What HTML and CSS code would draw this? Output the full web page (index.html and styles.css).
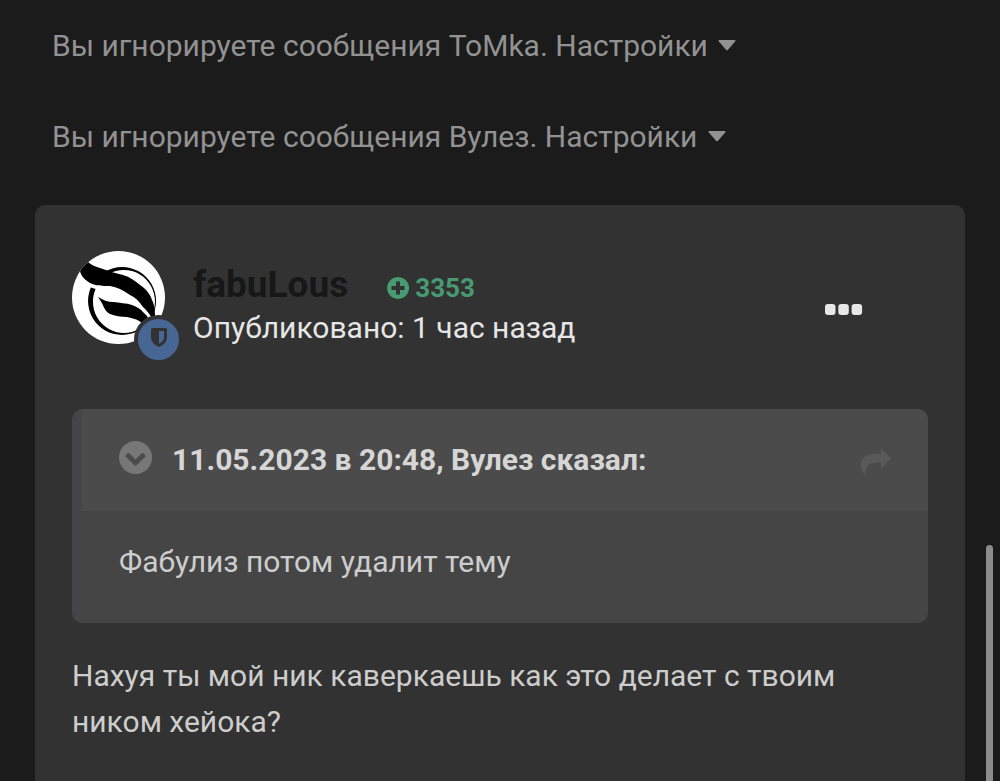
FILE: index.html
```html
<!DOCTYPE html>
<html lang="ru">
<head>
    <meta charset="UTF-8">
    <meta name="viewport" content="width=device-width, initial-scale=1.0">
    <title>Тема форума</title>
    <link rel="stylesheet" href="styles.css">
</head>
<body>
    <main class="feed">
        <!-- Ignored posts -->
        <div class="ignored">
            Вы игнорируете сообщения ToMka. <a href="#">Настройки
            <svg class="caret" viewBox="0 0 18 11"><path d="M1.500 0h15q1.500 0 .8 1.300L10 9.800q-1 1-2 0L.7 1.300Q0 0 1.500 0z"/></svg></a>
        </div>
        <div class="ignored">
            Вы игнорируете сообщения Вулез. <a href="#">Настройки
            <svg class="caret" viewBox="0 0 18 11"><path d="M1.500 0h15q1.500 0 .8 1.300L10 9.800q-1 1-2 0L.7 1.300Q0 0 1.500 0z"/></svg></a>
        </div>

        <!-- Post -->
        <article class="post">
            <header class="post-header">
                <div class="avatar">
                    <svg class="avatar-img" viewBox="0 0 93 93">
                        <defs><clipPath id="round"><circle cx="46.500" cy="46.500" r="46.500"/></clipPath></defs>
                        <g clip-path="url(#round)">
                            <rect width="93" height="93" fill="#fff"/>
                            <path fill-rule="evenodd" d="M50 16a34 34 0 1 0 .1 0zM52 19a31 31.500 0 1 1-.1 0z"/>
                            <path d="M14 31C24 37 31 37 38 37 48 39 58 44 69 58" fill="none" stroke="#fff" stroke-width="5"/>
                            <path d="M8 20Q11 13 16 11C19 14 24 16 28 17 36 20 43 22 51 24 58 26 63 30 68 34 75 39 78 43 80 49 82 53 83 58 83 66L80 68C78 63 75 60 71 56 67 50 63 46 58 44 51 39 45 36 38 35 31 35 24 35 18 32 13 29 9 25 8 20z"/>
                            <path d="M26 46C31 49 36 51 41 51 48 52 54 52 60 54 65 56 69 58 71 61Q75 64 77 69L70 72Q66 68 55 66C49 66 43 65 38 63 32 60 32 54 26 46z"/>
                        </g>
                    </svg>
                    <span class="badge">
                        <svg viewBox="0 0 16 19"><path fill-rule="evenodd" d="M1.500 0h13Q16 0 16 1.500V9c0 5-3.500 8-8 10C3.500 17 0 14 0 9V1.500Q0 0 1.500 0zM8 3v12.800c3-1.600 5-3.600 5-6.800V3z"/></svg>
                    </span>
                </div>
                <div class="author">
                    <div class="author-line">
                        <a class="name" href="#">fabuLous</a>
                        <span class="reputation">
                            <svg viewBox="0 0 22 22"><path fill-rule="evenodd" d="M11 0a11 11 0 1 0 .1 0zM9 4.500h4V9h4.500v4H13v4.500H9V13H4.500V9H9z"/></svg>
                            3353
                        </span>
                    </div>
                    <div class="date">Опубликовано: 1 час назад</div>
                </div>
                <button class="more" aria-label="Ещё">
                    <svg viewBox="0 0 38 11"><rect width="10.500" height="11" rx="3"/><rect x="13.300" width="10.500" height="11" rx="3"/><rect x="26.600" width="10.500" height="11" rx="3"/></svg>
                </button>
            </header>

            <blockquote class="quote">
                <div class="quote-header">
                    <button class="toggle" aria-label="Свернуть цитату">
                        <svg viewBox="0 0 33 33"><path fill-rule="evenodd" d="M16.500 0a16.500 16.500 0 1 0 .1 0zM7 14l1.500-1.600q1-1 2 0l6 6 6-6q1-1 2 0L26 14q1 1 0 2l-8.500 8.300q-1 1-2 0L7 16q-1-1 0-2z"/></svg>
                    </button>
                    <span class="quote-title">11.05.2023 в 20:48, Вулез сказал:</span>
                    <a class="jump" href="#" aria-label="Перейти к сообщению">
                        <svg viewBox="0 0 30 28"><path d="M20 0l10 10.500L20 20.500V14.500C10 14 3.500 16 4.500 27.500 2 25 0 21 0 17 0 8 7 5.500 20 5.500z"/></svg>
                    </a>
                </div>
                <p class="quote-text">Фабулиз потом удалит тему</p>
            </blockquote>

            <p class="post-text">Нахуя ты мой ник каверкаешь как это делает с твоим ником хейока?</p>
        </article>
    </main>
    <div class="scrollbar"></div>
</body>
</html>
```
FILE: styles.css
```css
* {
    box-sizing: border-box;
}

body {
    margin: 0;
    background-color: #1b1b1b;
    color: #cdcdcd;
    font-family: Roboto, "Liberation Sans", sans-serif;
    font-size: 30px;
    line-height: 46px;
    overflow: hidden;
}

a {
    color: inherit;
    text-decoration: none;
}

button {
    padding: 0;
    border: none;
    background: none;
    cursor: pointer;
}

svg {
    display: block;
    fill: currentColor;
}

p {
    margin: 0;
}

.feed {
    padding: 0 35px;
}

.ignored {
    padding: 23px 17px 22px;
    color: #929292;
}

.caret {
    display: inline-block;
    width: 18px;
    height: 11px;
    margin-left: 3px;
    vertical-align: 5px;
}

.post {
    margin-top: 23px;
    padding: 46px 37px;
    background-color: #323232;
    border-radius: 10px;
}

.post-header {
    display: flex;
    align-items: flex-start;
    margin-bottom: 60px;
}

.avatar {
    position: relative;
    width: 93px;
    margin-right: 28px;
    color: #000;
}

.avatar-img {
    width: 93px;
    height: 93px;
}

.badge {
    position: absolute;
    right: -18px;
    bottom: -20px;
    display: flex;
    align-items: center;
    justify-content: center;
    width: 49px;
    height: 49px;
    border: 4px solid #323232;
    border-radius: 50%;
    background-color: #476694;
    color: #323232;
}

.badge svg {
    width: 16px;
    height: 19px;
    margin-bottom: 4px;
}

.author {
    flex: 1;
    padding-top: 12px;
}

.author-line {
    display: flex;
    align-items: center;
    line-height: 38px;
}

.name {
    margin-right: 39px;
    color: #171717;
    font-size: 37px;
    font-weight: bold;
}

.reputation {
    display: flex;
    align-items: center;
    gap: 6px;
    padding-top: 6px;
    color: #479a72;
    font-size: 26px;
    font-weight: bold;
}

.reputation svg {
    width: 22px;
    height: 22px;
}

.date {
    line-height: 42px;
    color: #e6e6e6;
}

.more {
    margin: 53px 65px 0 0;
    color: #e8e8e8;
}

.more svg {
    width: 38px;
    height: 11px;
}

.quote {
    margin: 0 0 30px;
    border-left: 10px solid #444547;
    border-radius: 10px;
    background-color: #454545;
    overflow: hidden;
}

.quote-header {
    display: flex;
    align-items: center;
    padding: 28px 37px;
    border-bottom: 1px solid #434343;
    background-color: #4b4b4b;
}

.toggle {
    margin: 0 20px 6px 0;
    color: #777777;
}

.toggle svg {
    width: 33px;
    height: 33px;
}

.quote-title {
    flex: 1;
    color: #d6d6d6;
    font-weight: bold;
}

.jump {
    padding-top: 4px;
    color: #595959;
}

.jump svg {
    width: 30px;
    height: 28px;
}

.quote-text {
    padding: 27px 37px 38px;
}

/* Scroll position marker */
.scrollbar {
    position: fixed;
    top: 545px;
    right: 7px;
    bottom: 0;
    width: 7px;
    border-radius: 4px 4px 0 0;
    background-color: #8c8c8c;
}
```
